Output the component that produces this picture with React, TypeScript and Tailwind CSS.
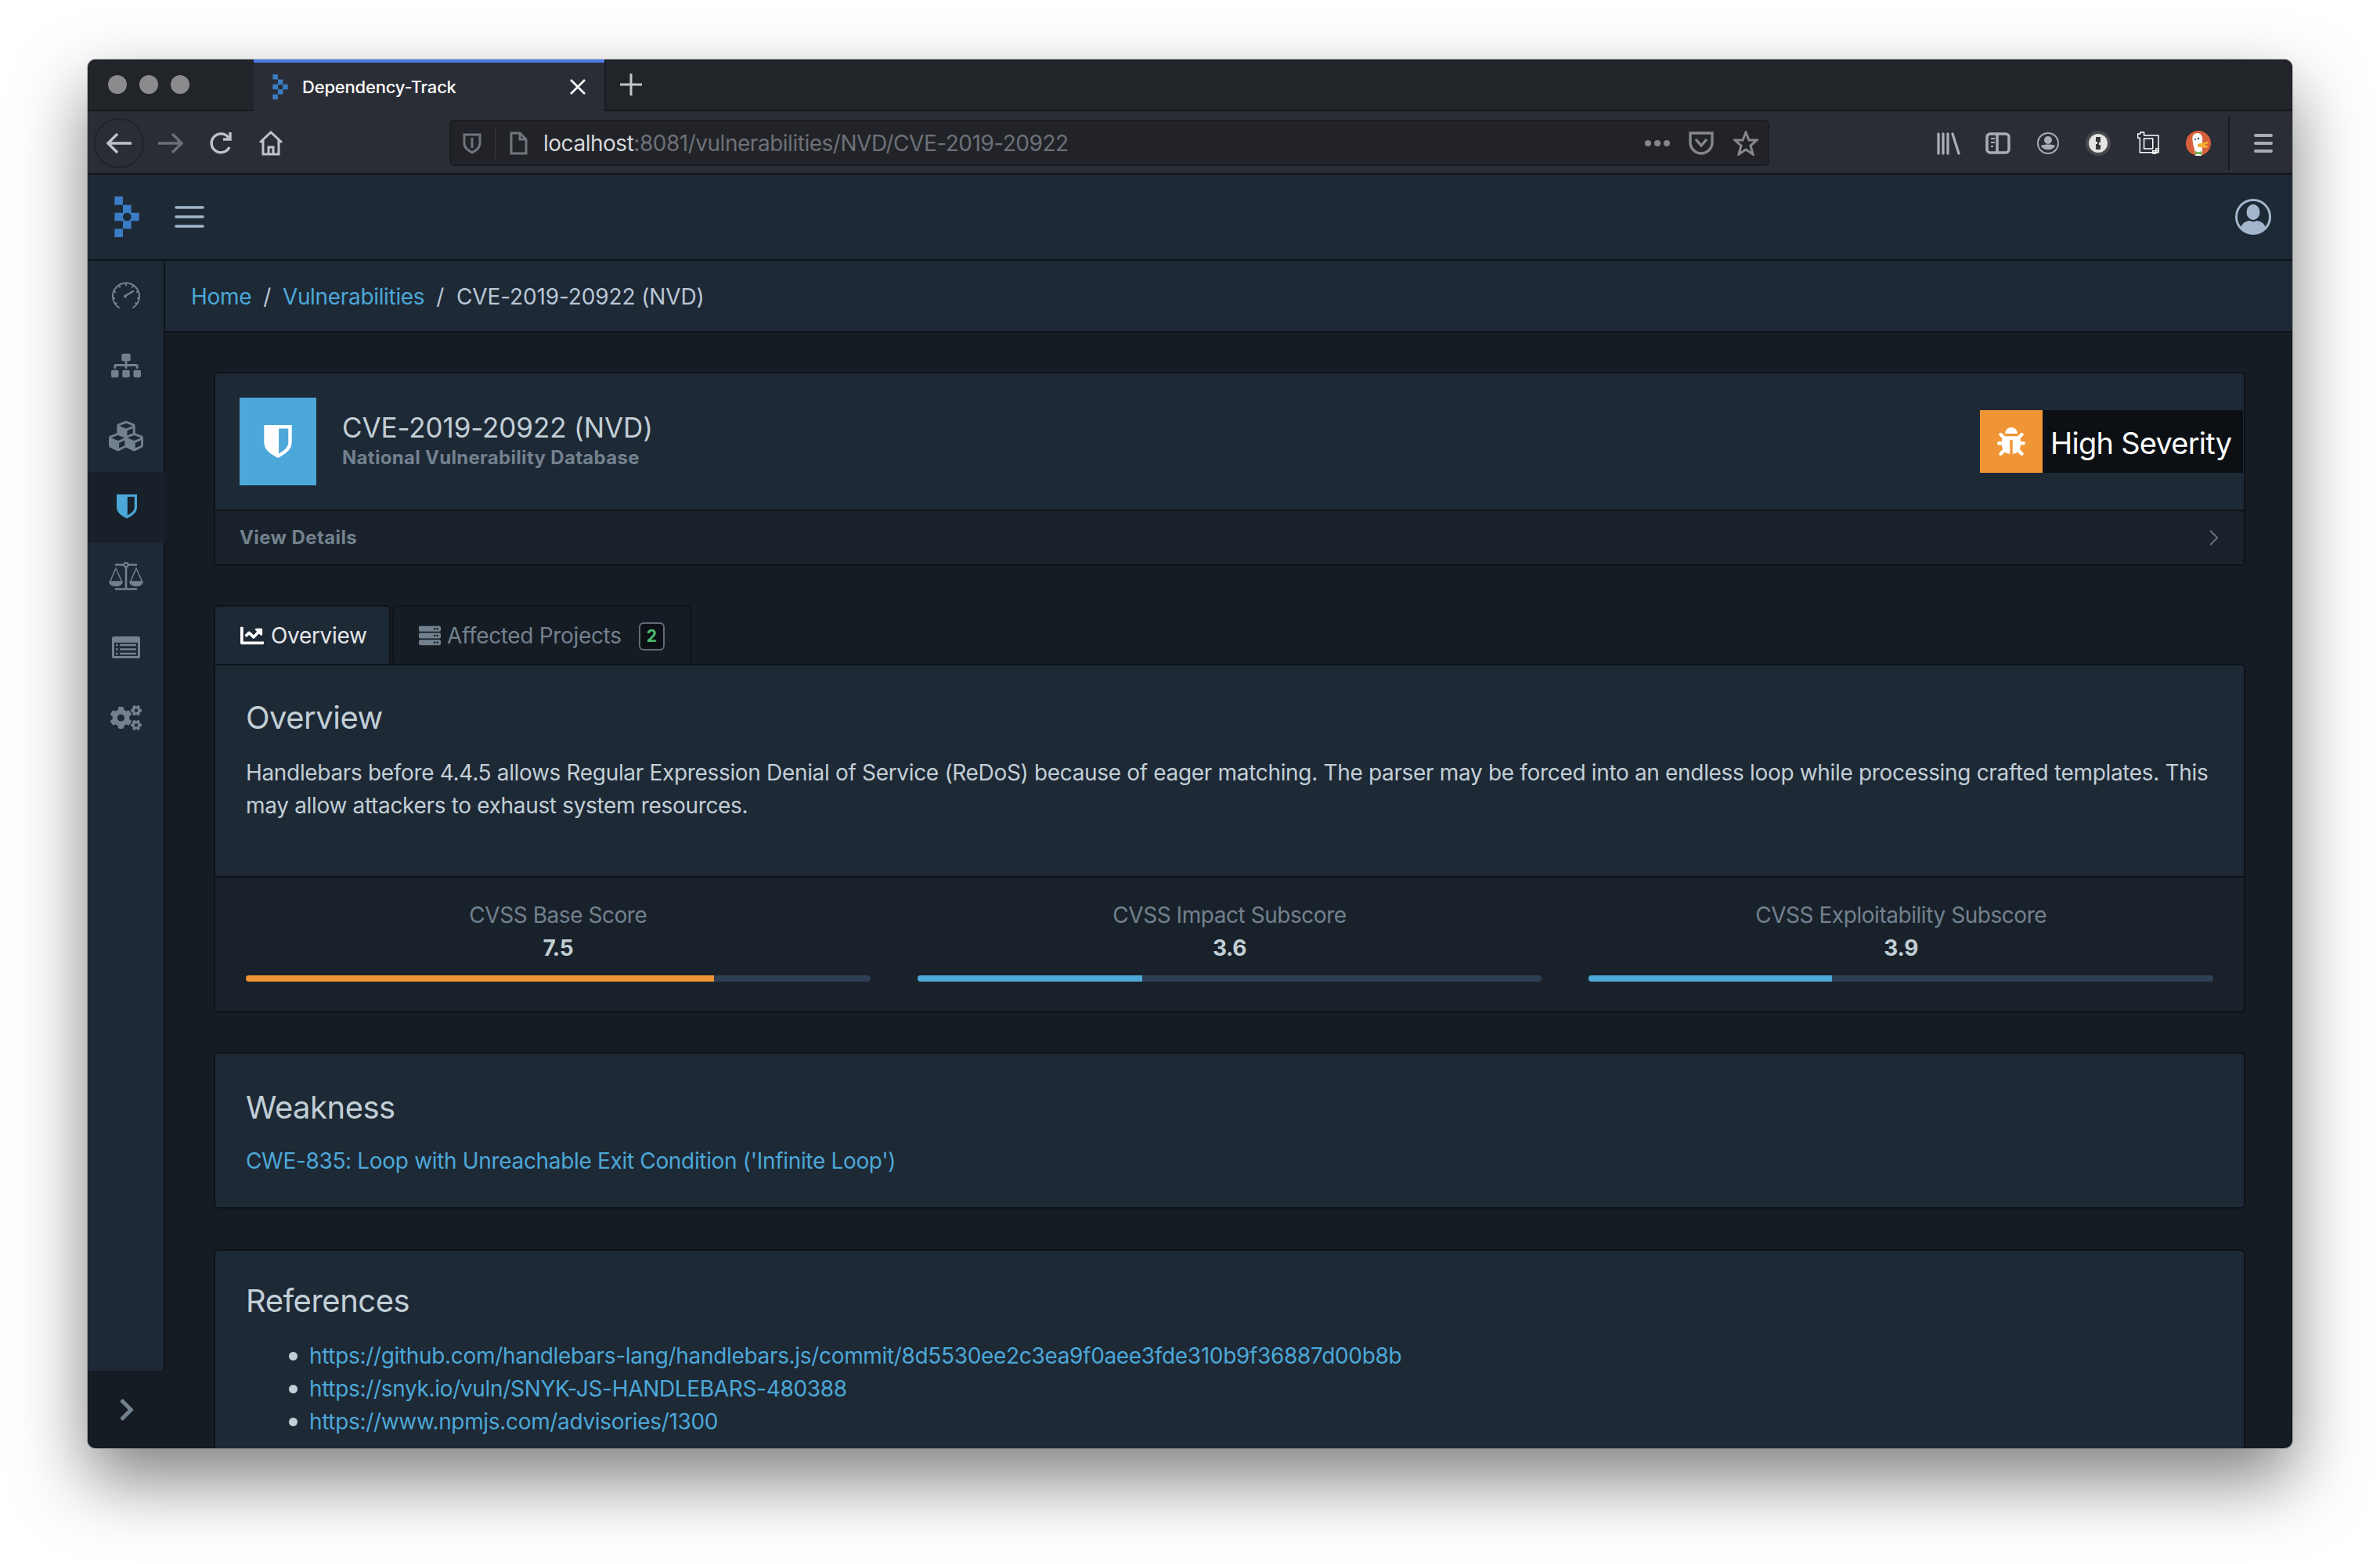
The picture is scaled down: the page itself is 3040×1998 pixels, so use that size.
import { ChevronRight } from "lucide-react"
import { FaBug, FaChartLine, FaCogs, FaCubes, FaSitemap, FaServer, FaChevronRight } from "react-icons/fa"

const inter = "[font-family:Inter,'Noto_Sans',sans-serif]"

const refs = [
  "https://github.com/handlebars-lang/handlebars.js/commit/8d5530ee2c3ea9f0aee3fde310b9f36887d00b8b",
  "https://snyk.io/vuln/SNYK-JS-HANDLEBARS-480388",
  "https://www.npmjs.com/advisories/1300",
]

function LogoMark({ className }: { className: string }) {
  return (
    <svg viewBox="0 0 94 156" className={className} fill="#3a7dc4">
      <path d="M0 0h32v32H0zM32 32h32v31H32z" />
      <path fillRule="evenodd" d="M0 62h94v32H0zM48 62a16 16 0 1 0 0 32 16 16 0 0 0 0-32z" />
      <path d="M32 94h32v30H32zM0 124h32v32H0z" />
    </svg>
  )
}

function ShieldHalf({ className, fill }: { className: string; fill: string }) {
  return (
    <svg viewBox="0 0 32 38" className={className} fill={fill}>
      <path fillRule="evenodd" d="M0 0h32v20c0 9-8 14-16 18C8 34 0 29 0 20zM17 4v29c6-3 11-7 11-13V4z" />
    </svg>
  )
}

function GaugeIcon() {
  return (
    <svg viewBox="0 0 36 34" className="h-[34px] w-[36px]" fill="none" stroke="#73818f" strokeWidth="2">
      <path d="M9 33A17 17 0 1 1 27 33" strokeLinecap="round" />
      <path d="M18 2v3M9 5l1.500 2.500M27 5l-1.500 2.500M2.500 12l2.500 1.500M33.500 12L31 13.500M1 21h3M35 21h-3M4 28l2.500-1.500M32 28l-2.500-1.500" />
      <path d="M17 18l10-6" strokeWidth="2.400" strokeLinecap="round" />
      <circle cx="17" cy="18.500" r="2" fill="#73818f" stroke="none" />
    </svg>
  )
}

function ScaleIcon() {
  return (
    <svg viewBox="0 0 44 37" className="h-[37px] w-[44px]" fill="none" stroke="#73818f" strokeWidth="2">
      <path d="M8 3.500h11M25 3.500h11M22 6.500V34M8 34.500h28" strokeWidth="2.600" />
      <circle cx="22" cy="3.500" r="2.600" />
      <path d="M9 8L1.500 25h15zM35 8l-7.500 17h15z" strokeWidth="1.500" />
      <path d="M0 25h18c-1 5-5 6-9 6s-8-1-9-6zM26 25h18c-1 5-5 6-9 6s-8-1-9-6z" fill="#73818f" stroke="none" />
    </svg>
  )
}

function ListCardIcon() {
  return (
    <svg viewBox="0 0 36 28" className="h-[28px] w-[36px]">
      <rect width="36" height="28" rx="2.500" fill="#73818f" />
      <rect x="3" y="8" width="30" height="17" fill="#1e2936" />
      <path d="M10 11h21M10 16.500h21M10 22h21" stroke="#73818f" strokeWidth="2.400" />
      <path d="M5 11h2.500M5 16.500h2.500M5 22h2.500" stroke="#73818f" strokeWidth="2.400" />
    </svg>
  )
}

function UserIcon() {
  return (
    <svg viewBox="0 0 46 46" className="mr-[27px] ml-auto h-[46px] w-[46px]" fill="#a3b6cc">
      <circle cx="23" cy="23" r="21.500" fill="none" stroke="#a3b6cc" strokeWidth="3" />
      <ellipse cx="23" cy="17" rx="8.500" ry="10" />
      <path d="M7 37c2-7 8-9 12-9 2 1.500 6 1.500 8 0 4 0 10 2 12 9a20 20 0 0 1-32 0z" />
    </svg>
  )
}

function SideItem({ children, active }: { children: React.ReactNode; active?: boolean }) {
  return (
    <div
      className={
        active
          ? "flex h-[90px] w-full items-center justify-center bg-[#18212a] pb-[3px]"
          : "flex h-[90px] w-full items-center justify-center border-r-2 border-[#0e1318] bg-[#1e2936] pb-[3px] text-[#73818f]"
      }
    >
      {children}
    </div>
  )
}

function Card({ children, className = "" }: { children: React.ReactNode; className?: string }) {
  return (
    <div className={`rounded-[6px] border-2 border-[#0e1318] bg-[#1e2936] ${className}`}>{children}</div>
  )
}

function Score({ label, value, pct, color }: { label: string; value: string; pct: number; color: string }) {
  return (
    <div className="flex-1 text-center">
      <div className="text-[28px] leading-[42px] tracking-[-0.45px] text-[#73818f]">{label}</div>
      <div className="text-[28px] leading-[42px] font-bold text-[#c2cfd6]">{value}</div>
      <div className="mt-[14px] h-[8px] overflow-hidden rounded-[4px] bg-[#2f4056]">
        <div className="h-full" style={{ width: `${pct}%`, backgroundColor: color }} />
      </div>
    </div>
  )
}

export default function App() {
  return (
    <div className={`h-[1998px] w-[3040px] overflow-hidden bg-white pt-[76px] pl-[112px] tracking-[-0.33px] ${inter}`}>
      <div className="flex h-[1774px] w-[2816px] flex-col overflow-hidden rounded-[10px] bg-[#151c23] shadow-[0_0_0_1px_rgba(0,0,0,0.2),0_40px_90px_rgba(0,0,0,0.5)]">
        {/* browser tabs */}
        <div className="flex h-[66px] shrink-0 items-stretch border-b-2 border-[#17191d] bg-[#212428]">
          <div className="flex w-[212px] items-center gap-[16px] pl-[26px]">
            <span className="h-[24px] w-[24px] rounded-full bg-[#8b8b8d]" />
            <span className="h-[24px] w-[24px] rounded-full bg-[#8b8b8d]" />
            <span className="h-[24px] w-[24px] rounded-full bg-[#8b8b8d]" />
          </div>
          <div className="-mb-[2px] flex w-[448px] items-center border-t-4 border-[#4a7be8] bg-[#2a2d35] pl-[24px]">
            <LogoMark className="h-[32px] w-[20px]" />
            <span className="ml-[18px] flex-1 text-[22px] font-medium tracking-[-0.2px] text-white">Dependency-Track</span>
            <svg viewBox="0 0 20 20" className="mr-[24px] h-[20px] w-[20px]" stroke="#fff" strokeWidth="2.600">
              <path d="M1 1l18 18M19 1L1 19" />
            </svg>
          </div>
          <div className="flex w-[66px] items-center justify-center border-l-2 border-[#17191d]">
            <svg viewBox="0 0 28 28" className="h-[28px] w-[28px]" stroke="#c4c6cb" strokeWidth="3">
              <path d="M14 0v28M0 14h28" />
            </svg>
          </div>
        </div>

        {/* browser toolbar */}
        <div className="flex h-[81px] shrink-0 items-center border-b-2 border-[#121417] bg-[#2a2d35] pt-[2px]">
          <div className="ml-[8px] flex h-[64px] w-[64px] items-center justify-center rounded-full border-2 border-[#212328]">
            <svg viewBox="0 0 32 28" className="h-[28px] w-[32px]" fill="none" stroke="#c0c3c9" strokeWidth="3.400">
              <path d="M32 14H3M14 2L2 14l12 12" />
            </svg>
          </div>
          <svg viewBox="0 0 32 28" className="ml-[18px] h-[28px] w-[32px]" fill="none" stroke="#6d6f77" strokeWidth="3.400">
            <path d="M0 14h29M18 2l12 12-12 12" />
          </svg>
          <svg viewBox="0 0 30 30" className="ml-[33px] h-[30px] w-[30px]" fill="none" stroke="#c0c3c9" strokeWidth="3.400">
            <path d="M26 20a12 12 0 1 1-1-12" />
            <path d="M27 1v9h-9" />
          </svg>
          <svg viewBox="0 0 32 32" className="ml-[33px] h-[32px] w-[32px]" fill="none" stroke="#c0c3c9" strokeWidth="3">
            <path d="M2 15L16 2l14 13M6 12v18h20V12M13 30v-9h6v9" />
          </svg>
          <div className="ml-[212px] flex h-[59px] w-[1686px] items-center rounded-[6px] border-2 border-[#1a1c20] bg-[#212328]">
            <svg viewBox="0 0 24 28" className="ml-[15px] h-[28px] w-[24px]" fill="none" stroke="#73757c" strokeWidth="3">
              <path d="M2 3h20v11c0 6-5 9-10 12C7 23 2 20 2 14zM12 7v13" />
            </svg>
            <span className="ml-[17px] h-[40px] w-[2px] bg-[#2e3036]" />
            <svg viewBox="0 0 24 30" className="ml-[16px] h-[30px] w-[24px]" fill="none" stroke="#73757c" strokeWidth="3">
              <path d="M3 2h11l8 8v18H3zM14 2v8h8" />
            </svg>
            <span className="ml-[20px] flex-1 text-[28px] tracking-[-0.48px] text-[#d7d8dc]">
              localhost<span className="text-[#6e7078]">:8081/vulnerabilities/NVD/CVE-2019-20922</span>
            </span>
            <div className="flex gap-[4px]">
              <span className="h-[8px] w-[8px] rounded-full bg-[#85878d]" />
              <span className="h-[8px] w-[8px] rounded-full bg-[#85878d]" />
              <span className="h-[8px] w-[8px] rounded-full bg-[#85878d]" />
            </div>
            <svg viewBox="0 0 32 30" className="ml-[24px] h-[30px] w-[32px]" fill="none" stroke="#85878d" strokeWidth="3.400">
              <path d="M2 2h28v12c0 8-7 14-14 14S2 22 2 14zM9 10l7 8 7-8" />
            </svg>
            <svg viewBox="0 0 32 32" className="mr-[12px] ml-[25px] h-[32px] w-[32px]" fill="none" stroke="#85878d" strokeWidth="3">
              <path d="M16 2l4 10h10l-8 7 3 11-9-6-9 6 3-11-8-7h10z" />
            </svg>
          </div>
          <div className="ml-[214px] flex items-center">
            <svg viewBox="0 0 30 30" className="h-[30px] w-[30px]" fill="none" stroke="#a9adb6" strokeWidth="3.300" strokeLinecap="round">
              <path d="M2 3v25M8 3v25M14 3v25M20 3l8 25" />
            </svg>
            <svg viewBox="0 0 32 28" className="ml-[32px] h-[28px] w-[32px]" fill="none" stroke="#a9adb6" strokeWidth="3.500">
              <rect x="2" y="2" width="28" height="24" rx="4" />
              <path d="M15 2v24" />
              <path d="M7 8h5M7 13h5M7 18h3" strokeWidth="2" />
            </svg>
            <svg viewBox="0 0 28 28" className="ml-[34px] h-[28px] w-[28px]" fill="#a9adb6">
              <circle cx="14" cy="14" r="13" fill="none" stroke="#a9adb6" strokeWidth="2" />
              <circle cx="14" cy="10" r="5" />
              <path d="M5 17c4-2 14-2 18 0-2 7-16 7-18 0z" />
            </svg>
            <svg viewBox="0 0 32 32" className="ml-[34px] h-[32px] w-[32px]">
              <circle cx="16" cy="16" r="16" fill="#48494c" />
              <circle cx="16" cy="16" r="12" fill="#e4e4e4" />
              <path d="M13 8h6v7h-2v3h2v6h-6v-7h2v-3h-2z" fill="#36383b" />
            </svg>
            <svg viewBox="0 0 85 86" className="ml-[34px] h-[29px] w-[28px]" fill="none" stroke="#fff" strokeWidth="4.500">
              <path d="M2 8h10V2h14v12h56v66h-72V24H2z" />
              <path d="M26 26h34v40H26z" />
              <path d="M60 74h12v10H60zM72 66h11v8H72z" />
            </svg>
            <svg viewBox="0 0 32 32" className="ml-[34px] h-[32px] w-[32px]">
              <circle cx="16" cy="16" r="16" fill="#d5603a" />
              <path d="M9 6c3-4 9-4 11 0 2 3 1 8 1 12v8l-1 6h-8c0-8-2-10-3-16-.5-4-1-7 0-10z" fill="#fff" />
              <circle cx="16" cy="10" r="1.200" fill="#2b3a55" />
              <circle cx="12" cy="11" r="1" fill="#2b3a55" />
              <path d="M15 17l13-3 1 2-6 2 5 1-1 3-11-1c-1-1-1-3-1-4z" fill="#f2b134" />
              <path d="M12 26l4 1.500 4-1.500v5l-4-1.500-4 1.500z" fill="#6bb04a" />
            </svg>
            <span className="ml-[22px] h-[68px] w-[2px] bg-[#17191d]" />
            <svg viewBox="0 0 24 24" className="ml-[31px] h-[24px] w-[24px]" stroke="#a9adb6" strokeWidth="4" strokeLinecap="round">
              <path d="M2 2h20M2 12h20M2 22h20" />
            </svg>
          </div>
        </div>

        {/* app header */}
        <div className="flex h-[110px] shrink-0 items-center border-b-2 border-[#0e1318] bg-[#1e2936]">
          <LogoMark className="ml-[34px] h-[52px] w-[32px]" />
          <svg viewBox="0 0 38 28" className="ml-[45px] h-[28px] w-[38px]" stroke="#a3b6cc" strokeWidth="3.600" strokeLinecap="round">
            <path d="M2 2h34M2 14h34M2 26h34" />
          </svg>
          <UserIcon />
        </div>

        <div className="flex min-h-0 flex-1">
          {/* sidebar */}
          <div className="flex w-[99px] shrink-0 flex-col">
            <SideItem><GaugeIcon /></SideItem>
            <SideItem><FaSitemap className="h-[32px] w-[38px]" /></SideItem>
            <SideItem><FaCubes className="h-[44px] w-[44px]" /></SideItem>
            <SideItem active><ShieldHalf className="h-[32px] w-[26px]" fill="#4ca8d8" /></SideItem>
            <SideItem><ScaleIcon /></SideItem>
            <SideItem><ListCardIcon /></SideItem>
            <SideItem><FaCogs className="h-[36px] w-[40px]" /></SideItem>
            <div className="flex-1 border-r-2 border-[#0e1318] bg-[#1e2936]" />
            <div className="flex h-[99px] shrink-0 items-center justify-center bg-[#151c23]">
              <FaChevronRight className="h-[32px] w-[32px] text-[#73818f]" />
            </div>
          </div>

          <div className="min-w-0 flex-1">
            {/* breadcrumb */}
            <div className="flex h-[92px] items-center gap-[15px] border-b-2 border-[#0e1318] bg-[#1e2936] pt-[2px] pl-[33px] text-[28px] text-[#b9c7d6]">
              <span className="text-[#4ca8d8]">Home</span>
              <span>/</span>
              <span className="text-[#4ca8d8]">Vulnerabilities</span>
              <span>/</span>
              <span className="ml-[1px] tracking-[-0.13px]">CVE-2019-20922 (NVD)</span>
            </div>

            <div className="pt-[50px] pr-[60px] pl-[62px]">
              {/* header card */}
              <Card>
                <div className="flex h-[176px] items-center border-b-2 border-[#0e1318] pr-[1px] pl-[31px]">
                  <div className="flex h-[112px] w-[98px] items-center justify-center bg-[#4ca8d8]">
                    <ShieldHalf className="h-[42px] w-[36px]" fill="#fff" />
                  </div>
                  <div className="ml-[33px] flex-1">
                    <div className="text-[35px] leading-[42px] tracking-[-0.1px] text-[#c2cfd6]">CVE-2019-20922 (NVD)</div>
                    <div className="text-[24px] leading-[36px] font-bold tracking-[0.3px] text-[#73818f]">National Vulnerability Database</div>
                  </div>
                  <div className="flex h-[80px] w-[336px] items-center bg-[#0c1014]">
                    <div className="flex h-[80px] w-[80px] items-center justify-center bg-[#f09535]">
                      <FaBug className="h-[36px] w-[36px] text-white" />
                    </div>
                    <span className="ml-[10px] pt-[5px] text-[38px] tracking-[-0.75px] text-white">High Severity</span>
                  </div>
                </div>
                <div className="flex h-[68px] items-center justify-between rounded-b-[6px] bg-[#19222b] pr-[21px] pl-[31px]">
                  <span className="text-[24px] font-bold tracking-[0.4px] text-[#73818f]">View Details</span>
                  <ChevronRight strokeWidth={1.600} className="h-[34px] w-[34px] text-[#5f6c79]" />
                </div>
              </Card>

              {/* tabs */}
              <div className="mt-[50px] flex h-[75px] items-stretch gap-[2px]">
                <div className="flex w-[226px] items-center gap-[8px] rounded-t-[6px] border-x-2 border-t-2 border-[#0e1318] bg-[#1e2936] pl-[31px] text-[28px] text-[#e4e7ea]">
                  <FaChartLine className="h-[30px] w-[32px] text-white" />
                  Overview
                </div>
                <div className="flex w-[382px] items-center rounded-t-[6px] border-x-2 border-t-2 border-[#0e1318] pl-[32px] text-[28px] text-[#73818f]">
                  <FaServer className="h-[28px] w-[28px]" />
                  <span className="ml-[8px]">Affected Projects</span>
                  <span className="mt-[2px] ml-[22px] flex h-[36px] w-[33px] items-center justify-center rounded-[6px] border-2 border-[#5f6c79] bg-[#0c1014] text-[21px] font-bold text-[#4dbd74]">
                    2
                  </span>
                </div>
              </div>

              {/* overview */}
              <Card className="rounded-tl-none">
                <div className="h-[271px] border-b-2 border-[#0e1318] px-[39px] pt-[43px]">
                  <h2 className="text-[40px] leading-[48px] font-normal tracking-[-0.5px] text-[#c2cfd6]">Overview</h2>
                  <p className="mt-[25px] text-[28px] leading-[42px] text-[#c2cfd6]">
                    Handlebars before 4.4.5 allows Regular Expression Denial of Service (ReDoS) because of eager matching. The parser may be forced into an endless loop while processing crafted templates. This may allow attackers to exhaust system resources.
                  </p>
                </div>
                <div className="flex h-[171px] gap-[60px] rounded-b-[6px] bg-[#19222b] px-[39px] pt-[27px]">
                  <Score label="CVSS Base Score" value="7.5" pct={75} color="#f09535" />
                  <Score label="CVSS Impact Subscore" value="3.6" pct={36} color="#4ca8d8" />
                  <Score label="CVSS Exploitability Subscore" value="3.9" pct={39} color="#4ca8d8" />
                </div>
              </Card>

              {/* weakness */}
              <Card className="mt-[50px] h-[200px] px-[39px] pt-[45px]">
                <h2 className="text-[40px] leading-[48px] tracking-[-0.5px] text-[#c2cfd6]">Weakness</h2>
                <p className="mt-[23px] text-[28px] leading-[42px] text-[#4ca8d8]">
                  CWE-835: Loop with Unreachable Exit Condition ('Infinite Loop')
                </p>
              </Card>

              {/* references */}
              <Card className="mt-[52px] h-[300px] px-[39px] pt-[40px]">
                <h2 className="text-[40px] leading-[48px] tracking-[-0.5px] text-[#c2cfd6]">References</h2>
                <ul className="mt-[25px] pl-[55px] text-[28px] leading-[42px] text-[#4ca8d8]">
                  {refs.map((href) => (
                    <li key={href} className="flex items-center gap-[15px]">
                      <span className="h-[11px] w-[11px] rounded-full bg-[#c2cfd6]" />
                      {href}
                    </li>
                  ))}
                </ul>
              </Card>
            </div>
          </div>
        </div>
      </div>
    </div>
  )
}
